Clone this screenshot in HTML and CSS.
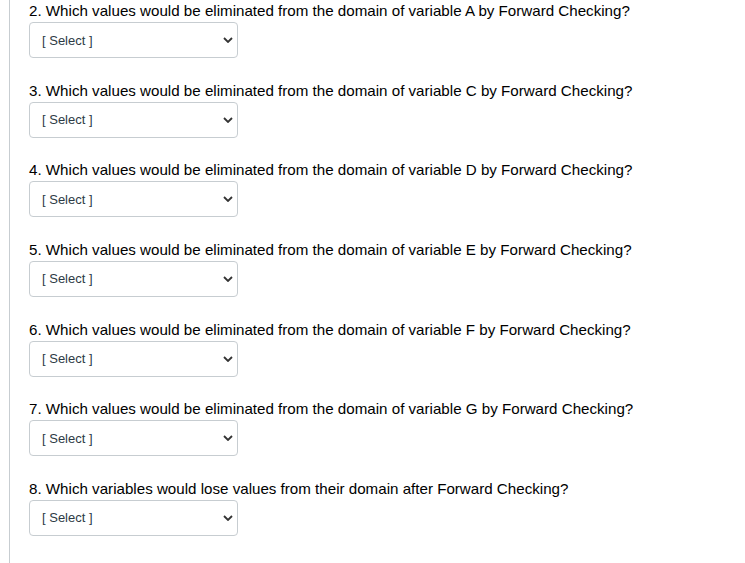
FILE: index.html
```html
<!DOCTYPE html>
<html lang="en">
<head>
  <meta charset="UTF-8">
  <title>Forward Checking Quiz</title>
  <link rel="stylesheet" href="styles.css">
</head>
<body>
  <div class="quiz">
    <div class="question">
      <p class="question-text">2. Which values would be eliminated from the domain of variable A by Forward Checking?</p>
      <select class="answer"><option>[ Select ]</option></select>
    </div>
    <div class="question">
      <p class="question-text">3. Which values would be eliminated from the domain of variable C by Forward Checking?</p>
      <select class="answer"><option>[ Select ]</option></select>
    </div>
    <div class="question">
      <p class="question-text">4. Which values would be eliminated from the domain of variable D by Forward Checking?</p>
      <select class="answer"><option>[ Select ]</option></select>
    </div>
    <div class="question">
      <p class="question-text">5. Which values would be eliminated from the domain of variable E by Forward Checking?</p>
      <select class="answer"><option>[ Select ]</option></select>
    </div>
    <div class="question">
      <p class="question-text">6. Which values would be eliminated from the domain of variable F by Forward Checking?</p>
      <select class="answer"><option>[ Select ]</option></select>
    </div>
    <div class="question">
      <p class="question-text">7. Which values would be eliminated from the domain of variable G by Forward Checking?</p>
      <select class="answer"><option>[ Select ]</option></select>
    </div>
    <div class="question">
      <p class="question-text">8. Which variables would lose values from their domain after Forward Checking?</p>
      <select class="answer"><option>[ Select ]</option></select>
    </div>
  </div>
</body>
</html>
```

FILE: styles.css
```css
* {
  margin: 0;
  padding: 0;
  box-sizing: border-box;
}

body {
  font-family: 'Liberation Sans', Arial, sans-serif;
  background-color: #ffffff;
  color: #2d3b45;
}

.quiz {
  margin-left: 9px;
  border-left: 1px solid #c7cdd1;
  padding: 1px 0 0 19px;
  min-height: 563px;
}

.question {
  margin-bottom: 22.67px;
}

.question-text {
  font-size: 15.15px;
  line-height: 20px;
  color: #000000;
}

.answer {
  appearance: none;
  display: block;
  width: 209px;
  height: 36px;
  margin-top: 1px;
  padding: 0 30px 0 12px;
  font-family: 'Liberation Sans', Arial, sans-serif;
  font-size: 13px;
  color: #2d3b45;
  background-color: #ffffff;
  border: 1px solid #c7cdd1;
  border-radius: 4px;
  background-image: url("data:image/svg+xml,%3Csvg xmlns='http://www.w3.org/2000/svg' width='10' height='6' viewBox='0 0 10 6'%3E%3Cpath d='M1 1l4 4 4-4' fill='none' stroke='%23333' stroke-width='1.8'/%3E%3C/svg%3E");
  background-repeat: no-repeat;
  background-position: right 4px center;
}
```
